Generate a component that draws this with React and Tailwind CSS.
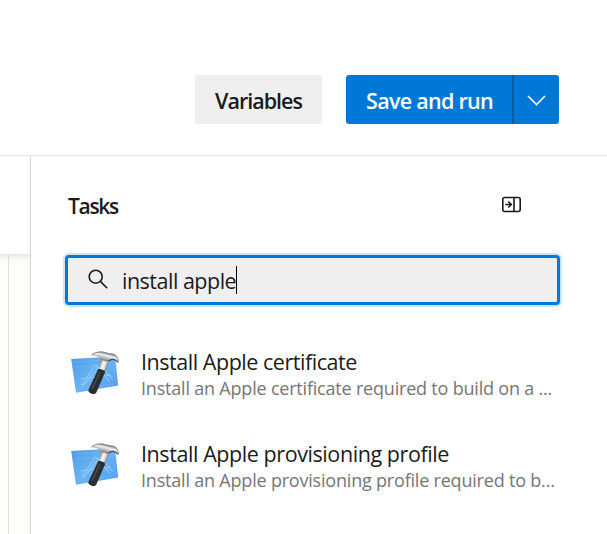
function XcodeIcon({ id }) {
  return (
    <svg className="h-12 w-[52px] shrink-0" viewBox="0 0 52 48" fill="none" aria-hidden="true">
      <defs>
        <linearGradient id={`${id}-paper`} x1="8" y1="8" x2="42" y2="42" gradientUnits="userSpaceOnUse">
          <stop stopColor="#519fe8" />
          <stop offset="0.5" stopColor="#6ab4f6" />
          <stop offset="1" stopColor="#549ff0" />
        </linearGradient>
        <linearGradient id={`${id}-shaft`} x1="30" y1="15" x2="38" y2="18" gradientUnits="userSpaceOnUse">
          <stop stopColor="#8d9297" />
          <stop offset="0.4" stopColor="#fafafa" />
          <stop offset="0.7" stopColor="#d5d7d9" />
          <stop offset="1" stopColor="#54585c" />
        </linearGradient>
        <linearGradient id={`${id}-head`} x1="33" y1="3" x2="31" y2="11" gradientUnits="userSpaceOnUse">
          <stop stopColor="#6f7377" />
          <stop offset="0.45" stopColor="#f0f1f2" />
          <stop offset="1" stopColor="#8c9094" />
        </linearGradient>
      </defs>
      <path d="M1.2 11 45 8.5 48.2 37.5 6 44.8Z" fill={`url(#${id}-paper)`} />
      <path d="M4 14 42 11.5 46 35.5 8 42M5 19 44 16M7 35 45 29" stroke="#78b8f4" strokeWidth="0.5" />
      <path d="M12 37 25 17 28 19 15 36ZM27 18 40 34M30 17 43 32M11 31 41 27" stroke="#9bcdf8" strokeWidth="1" />
      <path d="M30.5 9 39.5 11.5 34.8 25 28.6 22.5Z" fill={`url(#${id}-shaft)`} />
      <path d="M21.5 7.2C23.5 4.2 29 2.8 34 4L40 5.6C45 5 48.6 8 48.4 15 46.5 11.7 44 11.4 41.5 12L37.5 14 31 12C30 9.5 27 7.4 21.5 7.2Z" fill={`url(#${id}-head)`} />
      <path d="M21.5 7C25 4 30 3.5 34.5 4.5L40 6C45 5.7 48 8.8 48.4 13.5" stroke="#707478" strokeWidth="0.8" />
      <path d="M38.5 13C41 11 45 10.2 48 14.5" stroke="#45494d" strokeWidth="1.1" />
      <path d="M28.2 21.2C30 20.6 34.8 22.3 35.2 24L26.2 44.8C24.5 47.6 17.6 45.2 18.4 42Z" fill="#2b2d2f" />
      <path d="M30 24 22 41" stroke="#505356" strokeWidth="1.2" />
    </svg>
  );
}

const tasks = [
  {
    id: "certificate",
    title: "Install Apple certificate",
    description: "Install an Apple certificate required to build on a ...",
    titleTracking: "tracking-[-0.46px]",
    textTracking: "tracking-[-0.2px]",
  },
  {
    id: "profile",
    title: "Install Apple provisioning profile",
    description: "Install an Apple provisioning profile required to b...",
    titleTracking: "tracking-[-0.42px]",
    textTracking: "tracking-[-0.2px]",
  },
];

export default function App() {
  return (
    <div className="flex h-[534px] w-[607px] flex-col overflow-hidden bg-white font-['Open_Sans','Noto_Sans',sans-serif] text-[#1b1b1b]">
      <header className="flex h-[156px] shrink-0 items-start justify-end gap-6 border-b border-[#e5e5e5] pt-[75px] pr-12">
        <button className="flex h-[49px] w-[127px] items-center justify-center rounded-[3px] bg-[#efefef] pt-1 text-[21.5px] font-semibold tracking-[-1px] whitespace-nowrap">
          Variables
        </button>
        <div className="flex h-[49px] w-[213px] overflow-hidden rounded-[3px] bg-[#0078d7] text-white">
          <button className="flex w-[166px] items-center justify-center pt-1 pl-px text-[21.5px] font-semibold tracking-[-0.72px] whitespace-nowrap">
            Save and run
          </button>
          <button className="flex flex-1 items-center justify-center border-l-2 border-[#005ba1]" aria-label="More options">
            <svg className="mt-0.5 mr-px h-[11px] w-[19px]" viewBox="0 0 19 11" fill="none">
              <path d="m1 1 8.5 8.5L18 1" stroke="currentColor" strokeWidth="1.6" />
            </svg>
          </button>
        </div>
      </header>
      <main className="flex min-h-0 flex-1">
        <aside className="flex w-[31px] shrink-0 flex-col border-r border-[#d6d6d6]">
          <div className="h-[98px] shrink-0" />
          <div className="flex flex-1 bg-[#fdfdfb] bg-linear-to-b from-[#e8e8e7] via-[#f8f8f6] via-[5px] to-[#fdfdfb] to-[10px]">
            <div className="w-[9px] border-r border-[#dededc]" />
          </div>
        </aside>
        <section className="min-w-0 flex-1 pl-[34px]">
          <div className="flex h-[99px] items-start justify-between pr-[86px] pl-[3px]">
            <h2 className="pt-[34px] text-[21px] leading-8 font-semibold tracking-[-1.3px]">Tasks</h2>
            <svg className="mt-10 h-[17px] w-[19px]" viewBox="0 0 19 17" fill="none" stroke="#1b1b1b" strokeWidth="1.6">
              <rect x="0.8" y="1.5" width="17.4" height="14" rx="2" />
              <path d="M12 1.5v14M3.3 8.5h6M6.3 5.5l3 3-3 3" />
            </svg>
          </div>
          <div className="flex h-[50px] w-[495px] items-center rounded-[4px] border-[3px] border-[#0078d7] bg-[#efefef] pl-5 ring-2 ring-[#cce4f7]">
            <svg className="mb-0.5 h-5 w-5" viewBox="0 0 20 20" fill="none" stroke="#1b1b1b" strokeWidth="1.6">
              <circle cx="7.7" cy="7.7" r="6.5" />
              <path d="m12.4 12.4 6.8 6.8" />
            </svg>
            <span className="ml-[14px] pt-0.5 text-[21.5px] tracking-[-0.5px] whitespace-nowrap">install apple</span>
            <span className="h-7 w-px bg-black" />
          </div>
          <ul className="flex flex-col pt-[43px]">
            {tasks.map((task) => (
              <li key={task.id} className="flex h-[92px] items-start pl-[5px]">
                <XcodeIcon id={task.id} />
                <div className="ml-[19px] flex flex-col items-start whitespace-nowrap">
                  <span className={`text-[21.5px] leading-7 ${task.titleTracking}`}>{task.title}</span>
                  <span className={`text-[18px] leading-[25px] text-[#767676] ${task.textTracking}`}>{task.description}</span>
                </div>
              </li>
            ))}
          </ul>
        </section>
      </main>
    </div>
  );
}
